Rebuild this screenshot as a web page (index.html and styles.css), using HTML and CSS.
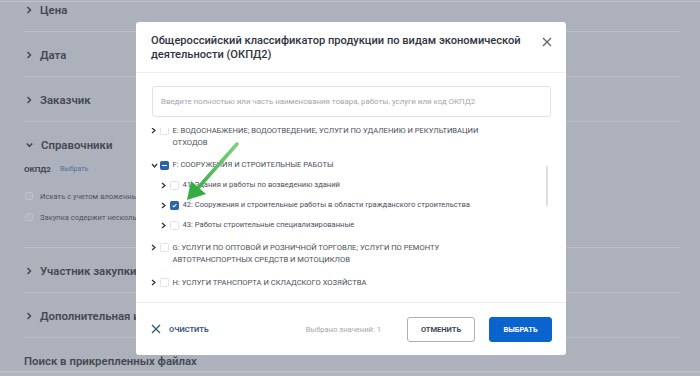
FILE: index.html
```html
<!DOCTYPE html>
<html lang="ru">
<head>
<meta charset="utf-8">
<title>ОКПД2</title>
<link rel="stylesheet" href="styles.css">
</head>
<body>
<div class="page">
  <div class="topline"></div>
  <aside class="filters">
    <div class="section"><div class="sec-head"><svg class="sec-chev" width="6" height="8" viewBox="0 0 6 8"><polyline points="1.5,1 4.5,4 1.5,7" /></svg>Цена</div></div>
    <div class="section"><div class="sec-head"><svg class="sec-chev" width="6" height="8" viewBox="0 0 6 8"><polyline points="1.5,1 4.5,4 1.5,7" /></svg>Дата</div></div>
    <div class="section"><div class="sec-head"><svg class="sec-chev" width="6" height="8" viewBox="0 0 6 8"><polyline points="1.5,1 4.5,4 1.5,7" /></svg>Заказчик</div></div>
    <div class="section section-open">
      <div class="sec-head"><svg class="sec-chev" width="7" height="8" viewBox="0 0 7 8"><polyline points="0.8,2.5 3.5,5.3 6.2,2.5" /></svg>Справочники</div>
      <div class="okpd-row"><span class="okpd-label">ОКПД2</span><span class="okpd-link">Выбрать</span></div>
      <div class="opt-row first"><span class="opt-box"></span>Искать с учетом вложенных позиций</div>
      <div class="opt-row"><span class="opt-box"></span>Закупка содержит несколько позиций</div>
    </div>
    <div class="section"><div class="sec-head"><svg class="sec-chev" width="6" height="8" viewBox="0 0 6 8"><polyline points="1.5,1 4.5,4 1.5,7" /></svg>Участник закупки</div></div>
    <div class="section"><div class="sec-head"><svg class="sec-chev" width="6" height="8" viewBox="0 0 6 8"><polyline points="1.5,1 4.5,4 1.5,7" /></svg>Дополнительная информация</div></div>
    <div class="section section-last"><div class="sec-head plain">Поиск в прикрепленных файлах</div></div>
  </aside>
  <div class="bottomline"></div>
</div>

<div class="modal">
  <div class="modal-head">
    <h2 class="modal-title">Общероссийский классификатор продукции по видам экономической<br>деятельности (ОКПД2)</h2>
    <svg class="close" width="10" height="10" viewBox="0 0 10 10"><path d="M1 1 L9 9 M9 1 L1 9" /></svg>
  </div>
  <input class="search" type="text" placeholder="Введите полностью или часть наименования товара, работы, услуги или код ОКПД2">
  <div class="tree-wrap">
    <ul class="tree">
      <li class="node">
        <div class="row"><span class="chev"><svg width="5" height="7" viewBox="0 0 5 7"><polyline points="1,1 4,3.5 1,6" /></svg></span><span class="cb"></span><span class="label">Е: ВОДОСНАБЖЕНИЕ; ВОДООТВЕДЕНИЕ, УСЛУГИ ПО УДАЛЕНИЮ И РЕКУЛЬТИВАЦИИ<br>ОТХОДОВ</span></div>
      </li>
      <li class="node">
        <div class="row"><span class="chev"><svg width="7" height="5" viewBox="0 0 7 5"><polyline points="1,1 3.5,4 6,1" /></svg></span><span class="cb cb-part"><i></i></span><span class="label">F: СООРУЖЕНИЯ И СТРОИТЕЛЬНЫЕ РАБОТЫ</span></div>
        <ul class="children">
          <li><div class="row child"><span class="chev"><svg width="5" height="7" viewBox="0 0 5 7"><polyline points="1,1 4,3.5 1,6" /></svg></span><span class="cb"></span><span class="label">41: Здания и работы по возведению зданий</span></div></li>
          <li><div class="row child"><span class="chev"><svg width="5" height="7" viewBox="0 0 5 7"><polyline points="1,1 4,3.5 1,6" /></svg></span><span class="cb cb-on"><svg width="9" height="9" viewBox="0 0 9 9"><polyline points="2,4.6 3.8,6.3 7,2.8" /></svg></span><span class="label">42: Сооружения и строительные работы в области гражданского строительства</span></div></li>
          <li><div class="row child"><span class="chev"><svg width="5" height="7" viewBox="0 0 5 7"><polyline points="1,1 4,3.5 1,6" /></svg></span><span class="cb"></span><span class="label">43: Работы строительные специализированные</span></div></li>
        </ul>
      </li>
      <li class="node">
        <div class="row"><span class="chev"><svg width="5" height="7" viewBox="0 0 5 7"><polyline points="1,1 4,3.5 1,6" /></svg></span><span class="cb"></span><span class="label">G: УСЛУГИ ПО ОПТОВОЙ И РОЗНИЧНОЙ ТОРГОВЛЕ; УСЛУГИ ПО РЕМОНТУ<br>АВТОТРАНСПОРТНЫХ СРЕДСТВ И МОТОЦИКЛОВ</span></div>
      </li>
      <li class="node">
        <div class="row"><span class="chev"><svg width="5" height="7" viewBox="0 0 5 7"><polyline points="1,1 4,3.5 1,6" /></svg></span><span class="cb"></span><span class="label">H: УСЛУГИ ТРАНСПОРТА И СКЛАДСКОГО ХОЗЯЙСТВА</span></div>
      </li>
    </ul>
    <div class="scrollbar"></div>
  </div>
  <div class="modal-foot">
    <div class="clear"><svg width="10" height="10" viewBox="0 0 10 10"><path d="M1 1 L9 9 M9 1 L1 9" /></svg><span>ОЧИСТИТЬ</span></div>
    <span class="count">Выбрано значений: 1</span>
    <div class="actions">
      <button class="btn btn-ghost" type="button">ОТМЕНИТЬ</button>
      <button class="btn btn-primary" type="button">ВЫБРАТЬ</button>
    </div>
  </div>
</div>

<svg class="arrow" width="700" height="376" viewBox="0 0 700 376">
  <defs>
    <linearGradient id="ag" x1="237" y1="144" x2="188" y2="200" gradientUnits="userSpaceOnUse">
      <stop offset="0" stop-color="#7fd07a"/>
      <stop offset="1" stop-color="#2fa842"/>
    </linearGradient>
  </defs>
  <line x1="237" y1="144" x2="197" y2="189" stroke="url(#ag)" stroke-width="3.6" stroke-linecap="round"/>
  <polygon points="187,200 191,181 206,194" fill="#35ad45"/>
</svg>
</body>
</html>
```

FILE: styles.css
```css
* { box-sizing: border-box; }

html, body {
  margin: 0;
  padding: 0;
}

body {
  width: 700px;
  height: 376px;
  overflow: hidden;
  position: relative;
  background: #adb1bb;
  font-family: Roboto, "Noto Sans", sans-serif;
}

.page {
  height: 376px;
  overflow: hidden;
}

.topline {
  height: 1px;
  margin-top: 1px;
  background: #c2c5cc;
}

.filters {
  margin-top: -15px;
  margin-left: 24px;
  width: 656px;
}

.section {
  padding: 15px 0 13px;
  border-bottom: 1px solid #b9bdc5;
}

.section-open {
  padding-bottom: 24px;
}

.section-last {
  border-bottom: none;
  padding-bottom: 2px;
}

.sec-head {
  display: flex;
  align-items: center;
  height: 16px;
  font-size: 11.4px;
  font-weight: 600;
  color: #444953;
  white-space: nowrap;
}

.sec-chev {
  margin-left: 2px;
  margin-right: 8px;
  fill: none;
  stroke: #444953;
  stroke-width: 1.5;
  flex: none;
}

.okpd-row {
  display: flex;
  align-items: center;
  height: 12px;
  margin-top: 10px;
}

.okpd-label {
  font-size: 8px;
  font-weight: 700;
  color: #3e434c;
}

.okpd-link {
  margin-left: 9px;
  font-size: 7px;
  color: #52709f;
}

.opt-row {
  display: flex;
  align-items: center;
  height: 12px;
  margin-top: 9px;
  font-size: 7.6px;
  color: #4d525b;
}

.opt-row.first {
  margin-top: 15px;
}

.opt-box {
  width: 8px;
  height: 8px;
  margin-left: 1px;
  margin-right: 7px;
  border: 1px solid #bec2ca;
  border-radius: 1.5px;
  background: #b1b5be;
}

.bottomline {
  height: 12px;
  border-top: 1px solid #c0c3ca;
  background: #b1b5be;
}

/* modal */
.modal {
  position: absolute;
  left: 136px;
  top: 22px;
  width: 430px;
  height: 333px;
  background: #fff;
  border-radius: 3px;
  display: flex;
  flex-direction: column;
}

.modal-head {
  display: flex;
  justify-content: space-between;
  align-items: flex-start;
  padding: 12px 14px 10px 15px;
  border-bottom: 1px solid #eceef1;
}

.modal-title {
  margin: 0;
  font-size: 11.1px;
  line-height: 14px;
  font-weight: 500;
  color: #2f343d;
  white-space: nowrap;
}

.close {
  margin-top: 3px;
  fill: none;
  stroke: #5b6069;
  stroke-width: 1.2;
  flex: none;
}

.search {
  display: block;
  margin: 13px 15px 0 16px;
  height: 31px;
  padding: 0 8px;
  border: 1px solid #dfe2e7;
  border-radius: 3px;
  font-family: Roboto, "Noto Sans", sans-serif;
  font-size: 7.9px;
  color: #3a3f48;
  outline: none;
}

.search::placeholder {
  color: #a0a5ad;
}

.tree-wrap {
  position: relative;
  flex: 1;
  margin-top: 11px;
  overflow: hidden;
}

.tree {
  list-style: none;
  margin: -8.5px 0 0 14px;
  padding: 0;
}

.tree ul {
  list-style: none;
  margin: 0;
  padding: 0;
}

.node {
  padding: 1.3px 0;
}

.children {
  padding-left: 10px !important;
}

.row {
  display: flex;
  align-items: flex-start;
  padding: 4px 0;
  font-size: 7.6px;
  line-height: 12px;
  color: #4a4f58;
}

.chev {
  width: 10px;
  height: 12px;
  display: flex;
  align-items: center;
  padding-left: 1px;
  flex: none;
}

.chev svg {
  fill: none;
  stroke: #30343b;
  stroke-width: 1.3;
}

.cb {
  flex: none;
  width: 9px;
  height: 9px;
  margin-top: 1.5px;
  margin-right: 3.5px;
  border: 1px solid #dfe2e6;
  border-radius: 1.5px;
  background: #fff;
  display: flex;
  align-items: center;
  justify-content: center;
}

.cb-part, .cb-on {
  border-color: #2b63ad;
  background: #2b63ad;
}

.cb-part i {
  display: block;
  width: 5px;
  height: 1.5px;
  background: #fff;
}

.cb-on svg {
  fill: none;
  stroke: #fff;
  stroke-width: 1.3;
}

.label {
  white-space: nowrap;
}

.scrollbar {
  position: absolute;
  right: 18px;
  top: 38px;
  width: 2px;
  height: 40px;
  border-radius: 1px;
  background: #dcdfe3;
}

.modal-foot {
  height: 53px;
  flex: none;
  display: flex;
  align-items: center;
  padding: 0 14px 0 15px;
  border-top: 1px solid #eceef1;
}

.clear {
  display: flex;
  align-items: center;
  margin-right: auto;
  font-size: 7.5px;
  font-weight: 700;
  color: #335a82;
}

.clear svg {
  margin-right: 8px;
  fill: none;
  stroke: #335a82;
  stroke-width: 1.4;
}

.count {
  margin-right: 26px;
  font-size: 7.6px;
  color: #a3a8b0;
}

.actions {
  display: flex;
  gap: 14px;
}

.btn {
  height: 25px;
  border-radius: 3px;
  font-family: Roboto, "Noto Sans", sans-serif;
  font-size: 7.5px;
  font-weight: 700;
  padding: 0;
}

.btn-ghost {
  width: 68px;
  border: 1px solid #a9b0ba;
  background: #fff;
  color: #3d4654;
}

.btn-primary {
  width: 63px;
  border: 1px solid #0b63ce;
  background: #0b63ce;
  color: #fff;
}

.arrow {
  position: absolute;
  left: 0;
  top: 0;
  pointer-events: none;
}
```
